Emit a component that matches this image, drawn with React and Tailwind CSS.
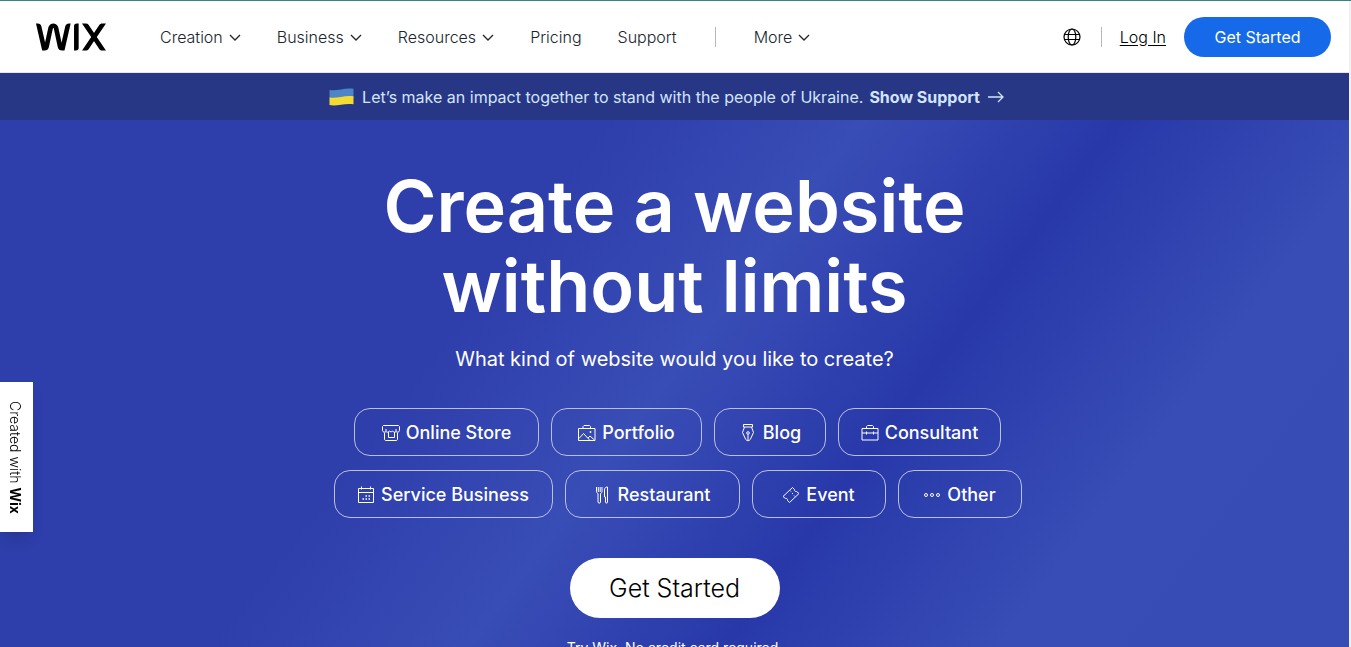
import { SiWix } from 'react-icons/si';

// Main navigation entries, "menu" marks the ones with a dropdown
const navItems = [
  { label: 'Creation', menu: true },
  { label: 'Business', menu: true },
  { label: 'Resources', menu: true },
  { label: 'Pricing' },
  { label: 'Support' },
];

// Shared frame for the 18px line icons
function Icon({ children }) {
  return (
    <svg
      viewBox="0 0 18 18"
      className="h-[18px] w-[18px] shrink-0"
      fill="none"
      stroke="currentColor"
      strokeWidth="1"
      strokeLinejoin="round"
      aria-hidden="true"
    >
      {children}
    </svg>
  );
}

function StoreIcon() {
  return (
    <Icon>
      <path d="M1.5 1.5h15l1 1v4a2 2 0 0 1-3.500 1V5M.5 2.500v4a2 2 0 0 0 3.500 1V5M1.500 1.500l-1 1" />
      <path d="M4 7.500c.8 1 2.500 1 3.300-.5 1 1 2.400 1 3.400 0 .8 1.500 2.500 1.500 3.300.5" />
      <path d="M2.500 9v6c0 1 .5 1.500 1.500 1.500h10c1 0 1.500-.5 1.500-1.500V9" />
      <path d="M6.500 8v5.500h6V8" />
    </Icon>
  );
}

function PortfolioIcon() {
  return (
    <Icon>
      <path d="M.5 4.500h16.500v12H.5zM5 4.500v-2l1-1h5.500l1 1v2" />
      <path d="M1 14.500l4.500-5 6.500 7M10 14l2-2 4.500 4" />
      <circle cx="12.500" cy="8" r=".9" fill="currentColor" stroke="none" />
    </Icon>
  );
}

function PenIcon() {
  return (
    <Icon>
      <path d="M4.500.5h9V3h-9zM5.500 3L3.500 8.500l3 6.500c1 2.200 4 2.200 5 0l3-6.500-2-5.500" />
      <path d="M9 10.500V17" />
      <circle cx="9" cy="9" r="1.300" />
    </Icon>
  );
}

function BriefcaseIcon() {
  return (
    <Icon>
      <path d="M1 4.500h16v11.500H1zM5.500 4.500v-2l1-1h5l1 1v2M1 9h16" />
      <path d="M5.500 7.500v3M12.500 7.500v3" />
    </Icon>
  );
}

function CalendarIcon() {
  return (
    <Icon>
      <path d="M1.500 2.500h15v14h-15zM1.500 6.500h15M4.500.5v3M13.500.5v3" />
      <path d="M8.500 10H10M11.500 10H13M5.500 13H7M8.500 13H10M11.500 13H13" strokeWidth="1.500" />
    </Icon>
  );
}

function CutleryIcon() {
  return (
    <Icon>
      <path d="M3.500 1v4.500c0 1 .5 1.500 1.500 2v8.500c0 1.500 2.500 1.500 2.500 0V7.500c1-.5 1.500-1 1.500-2V1M5.300 1v5M7.200 1v5" />
      <path d="M12.500 11h-1V4c0-2 1-3 3-3v15c0 1.500-2 1.500-2 0z" />
    </Icon>
  );
}

function TicketIcon() {
  return (
    <Icon>
      <path d="M10.500 1.500l2 2c-.3 1.400.8 2.300 2 2l2.500 2-9.500 9-2-2c.4-1.300-.7-2.400-2-2l-2.500-2z" />
      <path d="M8 4.500l1 1M10 7l1 1M12 9.500l1 1" />
    </Icon>
  );
}

function DotsIcon() {
  return (
    <Icon>
      <circle cx="3" cy="9" r="1.500" />
      <circle cx="9" cy="9" r="1.500" />
      <circle cx="15" cy="9" r="1.500" />
    </Icon>
  );
}

function GlobeIcon() {
  return (
    <svg
      viewBox="0 0 18 18"
      className="h-[18px] w-[18px]"
      fill="none"
      stroke="currentColor"
      strokeWidth="1.200"
      aria-hidden="true"
    >
      <circle cx="9" cy="9" r="8" />
      <ellipse cx="9" cy="9" rx="3.800" ry="8" />
      <path d="M1.500 6.500h15M1.500 11.500h15" />
    </svg>
  );
}

function FlagIcon() {
  return (
    <svg viewBox="0 0 25 18" className="h-[18px] w-[25px]" aria-hidden="true">
      <path d="M.5 2C8 3.500 15-.5 24.500.8v9C15 8.500 8 12 .5 10.500z" fill="#4c86c9" />
      <path d="M.5 9.500C8 11 15 7 24.500 8.300v8C15 15 8 18.500.5 17z" fill="#f3dc32" />
    </svg>
  );
}

// Website categories, split in the two rows shown under the headline
const categoryRows = [
  [
    { label: 'Online Store', icon: StoreIcon, size: 'w-[185px]' },
    { label: 'Portfolio', icon: PortfolioIcon, size: 'w-[151px]' },
    { label: 'Blog', icon: PenIcon, size: 'w-[112px]' },
    { label: 'Consultant', icon: BriefcaseIcon, size: 'w-[163px]' },
  ],
  [
    { label: 'Service Business', icon: CalendarIcon, size: 'w-[219px]' },
    { label: 'Restaurant', icon: CutleryIcon, size: 'w-[175px]' },
    { label: 'Event', icon: TicketIcon, size: 'w-[134px]' },
    { label: 'Other', icon: DotsIcon, size: 'w-[124px]' },
  ],
];

function NavButton({ label }) {
  return (
    <button className="flex items-center gap-1.5">
      {label}
      <svg
        viewBox="0 0 12 8"
        className="mt-0.5 h-2 w-3"
        fill="none"
        stroke="currentColor"
        strokeWidth="1.300"
        aria-hidden="true"
      >
        <path d="M1 1l5 5 5-5" />
      </svg>
    </button>
  );
}

function Header() {
  return (
    <header className="flex h-[72px] items-center border-b border-[#e6e6ea] bg-white pr-[18px] pl-9 text-base font-light text-[#20242c]">
      <a href="#" aria-label="Wix">
        <SiWix className="h-[70px] w-[70px] text-black" />
      </a>
      <nav className="ml-[54px] flex items-center gap-9">
        {navItems.map((item) =>
          item.menu ? (
            <NavButton key={item.label} label={item.label} />
          ) : (
            <a key={item.label} href="#">
              {item.label}
            </a>
          )
        )}
        <span className="mx-0.5 h-5 w-px bg-[#b5b8c0]" />
        <NavButton label="More" />
      </nav>
      <div className="ml-auto flex items-center">
        <button aria-label="Language" className="text-black">
          <GlobeIcon />
        </button>
        <span className="mr-[18px] ml-5 h-5 w-px bg-[#b5b8c0]" />
        <a href="#" className="text-black underline underline-offset-2">
          Log In
        </a>
        <button className="ml-[18px] h-10 w-[147px] rounded-full bg-[#166aea] font-normal text-white">
          Get Started
        </button>
      </div>
    </header>
  );
}

function SupportBanner() {
  return (
    <div className="flex h-[47px] items-center justify-center bg-[#273786] pr-4 text-base text-[#d3e5fc]">
      <FlagIcon />
      <p className="ml-2">Let’s make an impact together to stand with the people of Ukraine.</p>
      <a href="#" className="ml-1.5 flex items-center gap-2 font-bold">
        Show Support
        <svg
          viewBox="0 0 16 12"
          className="h-3 w-4"
          fill="none"
          stroke="currentColor"
          strokeWidth="1.300"
          aria-hidden="true"
        >
          <path d="M0 6h15M10 1l5 5-5 5" />
        </svg>
      </a>
    </div>
  );
}

export default function App() {
  return (
    <div className="h-screen overflow-hidden border-t border-[#3d7f88] bg-[#f1f1f1] font-[Inter,sans-serif]">
      <div className="mr-0.5">
        <Header />
        <SupportBanner />
        <main className="flex h-screen flex-col items-center bg-[linear-gradient(127deg,#2e3eab_0%,#2e3eab_33%,#394db6_47%,#2838a9_61%,#384db6_76%,#364bb3_100%)] text-white">
          <h1 className="mt-[46px] text-center text-[72px] leading-[80px] font-semibold">
            Create a website
            <br />
            without limits
          </h1>
          <p className="mt-4 text-xl leading-[34px]">What kind of website would you like to create?</p>
          <div className="mt-8 flex flex-col items-center gap-3.5 pl-1.5">
            {categoryRows.map((row, i) => (
              <div key={i} className="flex gap-3">
                {row.map(({ label, icon: CategoryIcon, size }) => (
                  <button
                    key={label}
                    className={`flex h-12 items-center justify-center gap-1.5 rounded-2xl border border-[#b9c0e4] pt-0.5 text-lg font-medium ${size}`}
                  >
                    <CategoryIcon />
                    {label}
                  </button>
                ))}
              </div>
            ))}
          </div>
          <button className="mt-10 h-[60px] w-[210px] rounded-full bg-white pt-0.5 text-[25px] font-light text-black">
            Get Started
          </button>
          <p className="mt-5 text-sm">Try Wix. No credit card required.</p>
        </main>
      </div>

      {/* Side tab pinned to the left edge */}
      <a
        href="#"
        className="fixed top-[382px] left-0 flex h-[150px] w-[33px] items-center justify-center bg-white pr-1 text-sm font-light text-black shadow-lg [writing-mode:vertical-rl]"
      >
        <span>
          Created with <b className="font-bold">Wix</b>
        </span>
      </a>
    </div>
  );
}
